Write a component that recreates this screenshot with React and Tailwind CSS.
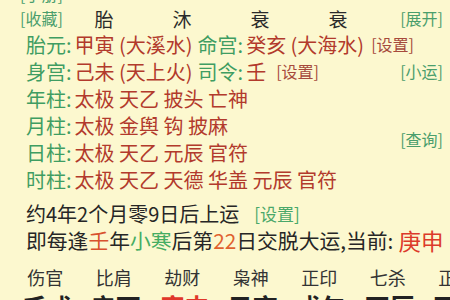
import React from "react";

const G = "text-[#3f9d62]";
const R = "text-[#b23a2c]";

function Lbl({ children }) {
  return <span className={`${G} mr-[3px]`}>{children}:</span>;
}

function Link({ children, color = "text-[#4a9e6c]", className = "" }) {
  return (
    <span className={`text-[16px] ${color} ${className}`}>[{children}]</span>
  );
}

const pillarRows = [
  ["年柱", "太极 天乙 披头 亡神"],
  ["月柱", "太极 金舆 钩 披麻"],
  ["日柱", "太极 天乙 元辰 官符"],
  ["时柱", "太极 天乙 天德 华盖 元辰 官符"],
];

const gods = ["伤官", "比肩", "劫财", "枭神", "正印", "七杀", "正印"];
const gz = [
  ["壬戌", "text-[#222]"],
  ["辛酉", "text-[#222]"],
  ["庚申", "text-[#e0372a]"],
  ["己亥", "text-[#222]"],
  ["戊午", "text-[#222]"],
  ["丙辰", "text-[#222]"],
  ["丙寅", "text-[#222]"],
];

export default function App() {
  return (
    <div className="w-[450px] h-[300px] overflow-hidden bg-[#fcf8cf] font-['Noto_Sans_CJK_SC',sans-serif] text-[20px] leading-[27px] text-[#262626]">
      <div className="-mt-[18px] h-[24px] flex items-center pl-[20px]">
        <Link>手册</Link>
      </div>
      <div className="h-[25px] flex items-center pl-[20px] pr-[7px]">
        <Link className="w-[45px]">收藏</Link>
        {["胎", "沐", "衰", "衰"].map((c, i) => (
          <span key={i} className="w-[78px] text-center text-[19px] text-[#2a2a2a]">
            {c}
          </span>
        ))}
        <Link className="ml-auto">展开</Link>
      </div>
      <div className="h-[27px] flex items-center pl-[26px] whitespace-nowrap">
        <Lbl>胎元</Lbl>
        <span className={`${R} mr-[5px]`}>甲寅 (大溪水)</span>
        <Lbl>命宫</Lbl>
        <span className={`${R} mr-[7px]`}>癸亥 (大海水)</span>
        <Link color="text-[#a64a3c]">设置</Link>
      </div>
      <div className="h-[27px] flex items-center pl-[26px] pr-[7px] whitespace-nowrap">
        <Lbl>身宫</Lbl>
        <span className={`${R} mr-[5px]`}>己未 (天上火)</span>
        <Lbl>司令</Lbl>
        <span className={`${R} mr-[10px]`}>壬</span>
        <Link color="text-[#a64a3c]">设置</Link>
        <Link className="ml-auto">小运</Link>
      </div>
      <div className="flex items-center pr-[7px]">
        <div className="flex flex-col pl-[26px]">
          {pillarRows.map(([l, v]) => (
            <div key={l} className="h-[27px] flex items-center whitespace-nowrap">
              <Lbl>{l}</Lbl>
              <span className={R}>{v}</span>
            </div>
          ))}
        </div>
        <Link className="ml-auto">查询</Link>
      </div>
      <div className="mt-[6px] h-[28px] flex items-center pl-[26px] whitespace-nowrap">
        <span>约4年2个月零9日后上运</span>
        <Link color="text-[#4aa86a]" className="ml-[15px] text-[17px]">设置</Link>
      </div>
      <div className="h-[27px] flex items-center pl-[26px] whitespace-nowrap text-[20.8px]">
        <span>即每逢</span>
        <span className="text-[#d8522e]">壬</span>
        <span>年</span>
        <span className="text-[#45ad62]">小寒</span>
        <span>后第</span>
        <span className="text-[#e0622f]">22</span>
        <span className="mr-[5px]">日交脱大运,当前:</span>
        <span className="text-[22.5px] text-[#dc3a2a]">庚申</span>
      </div>
      <div className="mt-[10px] h-[27px] flex items-center pl-[11px] whitespace-nowrap">
        {gods.map((g, i) => (
          <span key={i} className="w-[68.5px] shrink-0 text-center text-[18px] text-[#333]">
            {g}
          </span>
        ))}
      </div>
      <div className="h-[30px] flex items-center pl-[13px] whitespace-nowrap">
        {gz.map(([g, c], i) => (
          <span key={i} className={`w-[68.5px] shrink-0 text-center text-[25px] font-bold ${c}`}>
            {g}
          </span>
        ))}
      </div>
    </div>
  );
}
